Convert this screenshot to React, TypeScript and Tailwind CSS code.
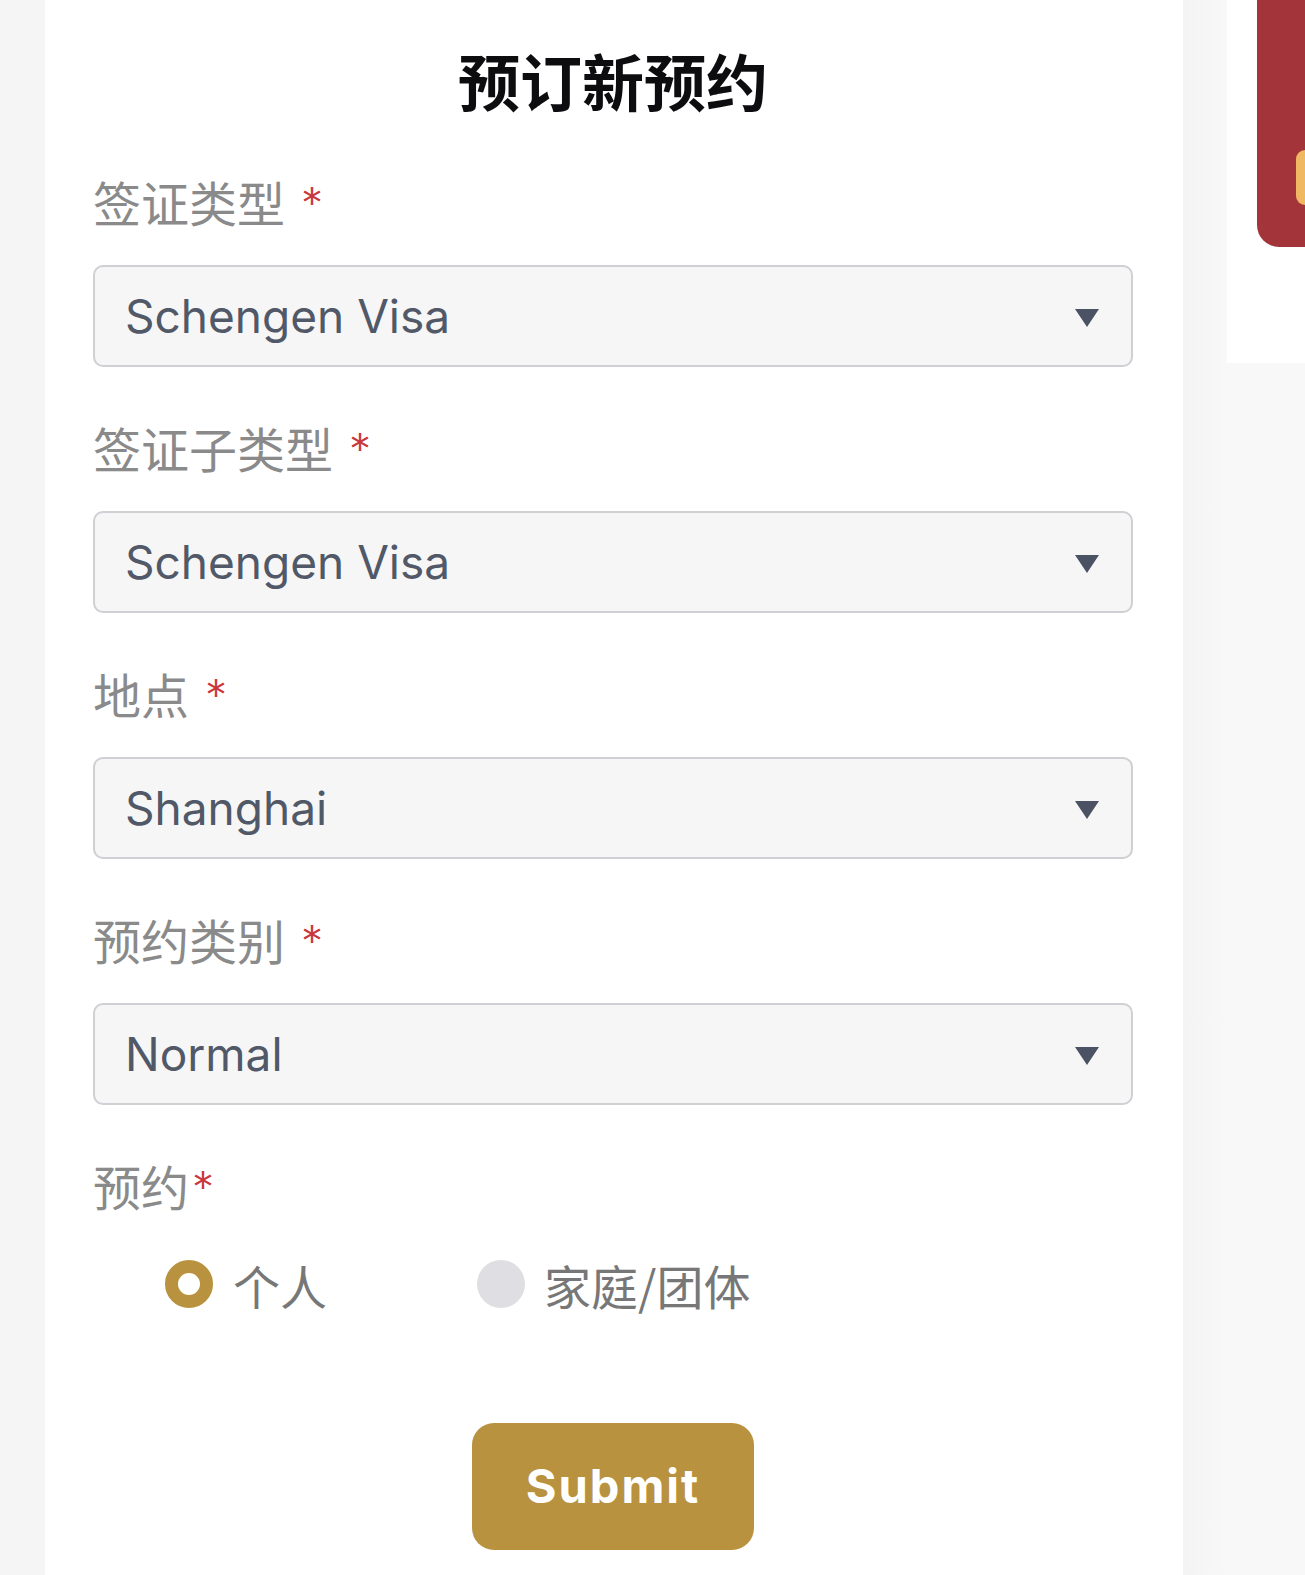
import { useState } from "react";

const cjk = '"Noto Sans CJK SC", "Noto Sans", sans-serif';
const latin = 'Inter, "Noto Sans CJK SC", sans-serif';

type Field = { label: string; value: string };

const fields: Field[] = [
  { label: "签证类型", value: "Schengen Visa" },
  { label: "签证子类型", value: "Schengen Visa" },
  { label: "地点", value: "Shanghai" },
  { label: "预约类别", value: "Normal" },
];

const Star = ({ gap }: { gap: string }) => (
  <span
    className={`${gap} mt-[4px] text-[44px] font-light leading-none text-[#c9383c]`}
    style={{ fontFamily: latin }}
  >
    *
  </span>
);

const SelectBox = ({ value }: { value: string }) => (
  <div className="flex h-[102px] items-center justify-between rounded-[10px] border-2 border-[#cfcfd4] bg-[#f6f6f6] pl-[30px] pr-[32px]">
    <span
      className="text-[46px] leading-none text-[#515867]"
      style={{ fontFamily: latin }}
    >
      {value}
    </span>
    <svg width="24" height="18" viewBox="0 0 24 18" className="mt-[3px]">
      <path d="M0 0 L24 0 L12 18 Z" fill="#4b5263" />
    </svg>
  </div>
);

const App = () => {
  const [booking, setBooking] = useState<"single" | "group">("single");

  return (
    <div className="flex h-[1575px] w-full overflow-hidden bg-[#f5f5f5]">
      <div className="w-[45px] shrink-0 bg-[#f5f5f5]" />

      <div className="w-[1138px] shrink-0 bg-white pl-[48px] pr-[50px] pt-[49px]">
        <h1
          className="text-center text-[62px] font-bold leading-none text-[#0d0d10]"
          style={{ fontFamily: cjk }}
        >
          预订新预约
        </h1>

        <div className="mt-[66px]">
          {fields.map((field) => (
            <div key={field.label} className="mb-[56px]">
              <label className="mb-[40px] flex h-[48px] items-start">
                <span
                  className="text-[48px] leading-none text-[#8a8a8a]"
                  style={{ fontFamily: cjk }}
                >
                  {field.label}
                </span>
                <Star gap="ml-[16px]" />
              </label>
              <SelectBox value={field.value} />
            </div>
          ))}

          <label className="flex h-[48px] items-start">
            <span
              className="text-[48px] leading-none text-[#8a8a8a]"
              style={{ fontFamily: cjk }}
            >
              预约
            </span>
            <Star gap="ml-[3px]" />
          </label>

          <div className="mt-[51px] flex items-center pl-[72px]">
            <button
              type="button"
              onClick={() => setBooking("single")}
              className="flex items-center gap-[20px]"
            >
              <span
                className={
                  booking === "single"
                    ? "h-[48px] w-[48px] rounded-full border-[13px] border-[#b8923f] bg-white"
                    : "h-[48px] w-[48px] rounded-full bg-[#dedee3]"
                }
              />
              <span
                className="text-[47px] leading-none text-[#777777]"
                style={{ fontFamily: cjk }}
              >
                个人
              </span>
            </button>

            <button
              type="button"
              onClick={() => setBooking("group")}
              className="ml-[150px] flex items-center gap-[19px]"
            >
              <span
                className={
                  booking === "group"
                    ? "h-[48px] w-[48px] rounded-full border-[13px] border-[#b8923f] bg-white"
                    : "h-[48px] w-[48px] rounded-full bg-[#dedee3]"
                }
              />
              <span
                className="text-[47px] leading-none text-[#777777]"
                style={{ fontFamily: cjk }}
              >
                家庭/团体
              </span>
            </button>
          </div>

          <div className="mt-[115px] flex justify-center">
            <button
              type="button"
              className="h-[127px] w-[282px] rounded-[22px] bg-[#b8923f] text-[47px] font-bold tracking-[2px] text-white"
              style={{ fontFamily: latin }}
            >
              Submit
            </button>
          </div>
        </div>
      </div>

      <div className="w-[44px] shrink-0 bg-gradient-to-r from-[#f4f4f4] to-[#f8f8f8]" />

      <div className="flex flex-1 flex-col">
        <div className="h-[363px] bg-white pl-[30px]">
          <div className="h-[247px] rounded-bl-[22px] bg-[#a33439] pl-[39px] pt-[150px]">
            <div className="h-[55px] rounded-l-[12px] bg-[#f0b862]" />
          </div>
        </div>
        <div className="flex-1 bg-[#f8f8f8]" />
      </div>
    </div>
  );
};

export default App;
